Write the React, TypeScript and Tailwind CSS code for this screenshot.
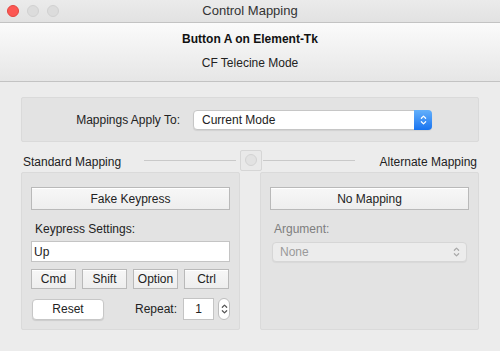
import React from "react";

function Chevrons({ className }: { className: string }) {
  return (
    <svg viewBox="0 0 8 14" className={className} fill="none" stroke="currentColor" strokeWidth="1.4" strokeLinecap="round" strokeLinejoin="round">
      <path d="M1.5 5 4 2.5 6.5 5" />
      <path d="M1.5 9 4 11.5 6.5 9" />
    </svg>
  );
}

function SquareButton({ label, className }: { label: string; className: string }) {
  return (
    <div
      className={`flex items-center justify-center border border-[#b9b9b9] bg-gradient-to-b from-[#f7f7f7] to-[#eeeeee] text-[12px] text-[#222] shadow-[inset_0_1px_0_#fff] ${className}`}
    >
      {label}
    </div>
  );
}

export default function App() {
  return (
    <div className="h-[351px] w-[500px] overflow-hidden bg-[#ececec] font-['Liberation_Sans',Arial,sans-serif] text-[#222]">
      {/* title bar */}
      <div className="relative flex h-[22px] items-center justify-center bg-gradient-to-b from-[#ebebeb] to-[#e2e2e2] text-[13px] text-[#333]">
        <div className="absolute left-[7px] top-[5px] flex gap-[8px]">
          <span className="h-[12px] w-[12px] rounded-full border border-[#e2463f] bg-[#fc5753]" />
          <span className="h-[12px] w-[12px] rounded-full border border-[#d1d1d1] bg-[#dcdcdc]" />
          <span className="h-[12px] w-[12px] rounded-full border border-[#d1d1d1] bg-[#dcdcdc]" />
        </div>
        Control Mapping
      </div>

      {/* header */}
      <div className="flex h-[60px] flex-col items-center border-y border-[#c3c3c3] bg-gradient-to-b from-[#fbfbfb] to-[#e6e6e6]">
        <div className="mt-[7px] text-[12px] font-bold text-[#111]">Button A on Element-Tk</div>
        <div className="mt-[6px] text-[12px] text-[#222]">CF Telecine Mode</div>
      </div>

      <div className="px-[21px] pt-[15px]">
        {/* mappings apply to */}
        <div className="flex h-[45px] items-center rounded-[2px] border border-[#dadada] bg-[#e3e3e3]">
          <div className="w-[158px] text-right text-[12px]">Mappings Apply To:</div>
          <div className="ml-[13px] flex h-[20px] w-[239px] items-stretch rounded-[4px] border border-[#c6c6c6] bg-white shadow-[0_1px_1px_rgba(0,0,0,0.08)]">
            <div className="flex flex-1 items-center pl-[8px] text-[12px]">Current Mode</div>
            <div className="-my-px -mr-px flex w-[18px] items-center justify-center rounded-r-[4px] bg-gradient-to-b from-[#63b0fb] to-[#1673f0]">
              <Chevrons className="h-[12px] w-[7px] text-white" />
            </div>
          </div>
        </div>

        {/* section headings */}
        <div className="mt-[7px] flex h-[22px] items-center text-[12px]">
          <div className="w-[123px] pl-[2px] pt-[4px]">Standard Mapping</div>
          <div className="h-px w-[92px] bg-[#c9c9c9]" />
          <div className="ml-[4px] flex h-[21px] w-[22px] items-center justify-center rounded-[2px] border border-[#d6d6d6] bg-[#e9e9e9]">
            <span className="h-[12px] w-[12px] rounded-full border border-[#d3d3d3] bg-[#e2e2e2]" />
          </div>
          <div className="ml-px h-px w-[92px] bg-[#c9c9c9]" />
          <div className="flex-1 pr-[2px] pt-[4px] text-right">Alternate Mapping</div>
        </div>

        {/* panels */}
        <div className="mt-px grid grid-cols-2 gap-[20px]">
          <div className="h-[158px] rounded-[2px] border border-[#dadada] bg-[#e3e3e3] px-[9px] pt-[14px]">
            <SquareButton label="Fake Keypress" className="h-[23px]" />
            <div className="mt-[10px] pl-[4px] text-[12px]">Keypress Settings:</div>
            <div className="mt-[3px] flex h-[21px] items-center border border-[#c4c4c4] bg-white pl-[2px] text-[12px]">Up</div>
            <div className="mt-[7px] flex gap-[6px]">
              <SquareButton label="Cmd" className="h-[20px] w-[45px]" />
              <SquareButton label="Shift" className="h-[20px] w-[45px]" />
              <SquareButton label="Option" className="h-[20px] w-[45px]" />
              <SquareButton label="Ctrl" className="h-[20px] w-[45px]" />
            </div>
            <div className="mt-[9px] flex items-center">
              <div className="ml-px flex h-[21px] w-[72px] items-center justify-center rounded-[4px] border border-[#c7c7c7] bg-white text-[12px] shadow-[0_1px_1px_rgba(0,0,0,0.1)]">
                Reset
              </div>
              <div className="ml-[31px] text-[12px]">Repeat:</div>
              <div className="ml-[6px] flex h-[22px] w-[31px] items-center justify-center border border-[#c4c4c4] bg-white text-[12px]">1</div>
              <div className="ml-[4px] flex h-[22px] w-[12px] items-center justify-center rounded-[6px] border border-[#bdbdbd] bg-white">
                <Chevrons className="h-[14px] w-[7px] text-[#555]" />
              </div>
            </div>
          </div>

          <div className="h-[158px] rounded-[2px] border border-[#dadada] bg-[#e3e3e3] px-[9px] pt-[14px]">
            <SquareButton label="No Mapping" className="h-[23px]" />
            <div className="mt-[10px] pl-[4px] text-[12px] text-[#7e7e7e]">Argument:</div>
            <div className="mx-[2px] mt-[4px] flex h-[20px] items-center justify-between rounded-[4px] border border-[#d6d6d6] bg-[#ececec] pl-[7px] pr-[6px] text-[12px] text-[#9a9a9a] shadow-[0_1px_1px_rgba(0,0,0,0.05)]">
              None
              <Chevrons className="h-[12px] w-[7px] text-[#a8a8a8]" />
            </div>
          </div>
        </div>
      </div>
    </div>
  );
}
